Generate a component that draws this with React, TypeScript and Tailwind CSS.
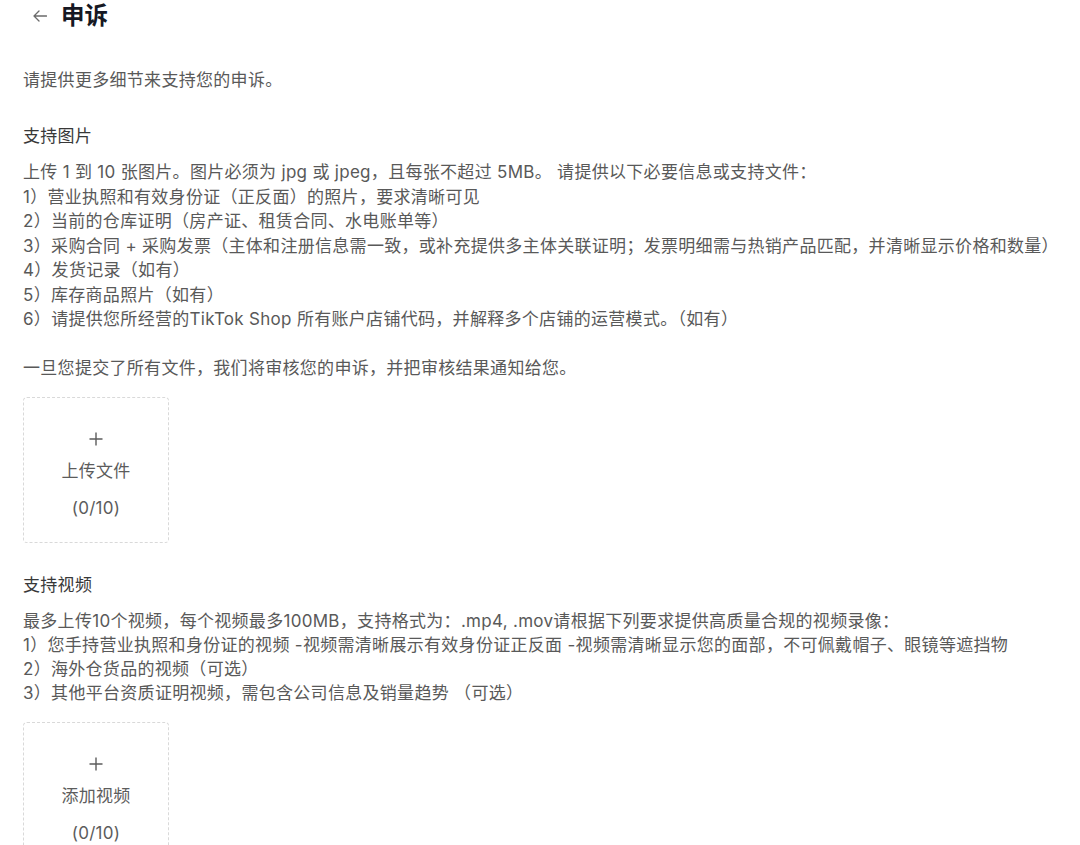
import React from "react";

const font = { fontFamily: '"Inter", "Noto Sans CJK SC", sans-serif' };

function UploadBox({ label }: { label: string }) {
  return (
    <div className="w-[146px] h-[146px] border border-dashed border-[#d9d9d9] rounded-[4px] flex flex-col items-center pt-[33px] text-[#5c5c5c]">
      <svg width="16" height="16" viewBox="0 0 16 16" className="shrink-0">
        <path d="M8 1.5v13M1.5 8h13" stroke="#5c5c5c" strokeWidth="1.4" fill="none" />
      </svg>
      <div className="mt-[12px] text-[17px] leading-[24.5px] tracking-[0.3px]">{label}</div>
      <div className="mt-[12.5px] text-[17px] leading-[24.5px] tracking-[0.3px]">(0/10)</div>
    </div>
  );
}

export default function App() {
  const imageLines = [
    "上传 1 到 10 张图片。图片必须为 jpg 或 jpeg，且每张不超过 5MB。 请提供以下必要信息或支持文件：",
    "1）营业执照和有效身份证（正反面）的照片，要求清晰可见",
    "2）当前的仓库证明（房产证、租赁合同、水电账单等）",
    "3）采购合同 + 采购发票（主体和注册信息需一致，或补充提供多主体关联证明；发票明细需与热销产品匹配，并清晰显示价格和数量）",
    "4）发货记录（如有）",
    "5）库存商品照片（如有）",
    "6）请提供您所经营的TikTok Shop 所有账户店铺代码，并解释多个店铺的运营模式。（如有）",
  ];
  const videoLines = [
    "最多上传10个视频，每个视频最多100MB，支持格式为：.mp4, .mov请根据下列要求提供高质量合规的视频录像：",
    "1）您手持营业执照和身份证的视频 -视频需清晰展示有效身份证正反面 -视频需清晰显示您的面部，不可佩戴帽子、眼镜等遮挡物",
    "2）海外仓货品的视频（可选）",
    "3）其他平台资质证明视频，需包含公司信息及销量趋势 （可选）",
  ];
  return (
    <div className="w-[1080px] h-[845px] overflow-hidden bg-white" style={font}>
      <div className="flex items-center h-[32px] pl-[33px]">
        <svg width="14" height="12" viewBox="0 0 14 12" className="shrink-0">
          <path d="M13.5 6H1M6 1L1 6l5 5" stroke="#6b6b6b" strokeWidth="1.3" fill="none" strokeLinecap="round" strokeLinejoin="round" />
        </svg>
        <div className="ml-[14px] text-[23.5px] leading-[32px] font-bold text-[#161823]">申诉</div>
      </div>
      <div className="px-[23px] text-[17px] tracking-[0.3px]">
        <div className="mt-[36px] leading-[24.5px] text-[#595959]">请提供更多细节来支持您的申诉。</div>
        <div className="mt-[31.5px] leading-[24.5px] font-normal text-[#383838]">支持图片</div>
        <div className="mt-[11.5px] leading-[24.5px] text-[#595959] whitespace-nowrap">
          {imageLines.map((l, i) => (
            <div key={i}>{l}</div>
          ))}
          <div className="mt-[24.5px]">一旦您提交了所有文件，我们将审核您的申诉，并把审核结果通知给您。</div>
        </div>
        <div className="mt-[16px]">
          <UploadBox label="上传文件" />
        </div>
        <div className="mt-[30px] leading-[24.5px] font-normal text-[#383838]">支持视频</div>
        <div className="mt-[11.5px] leading-[24px] text-[#595959] whitespace-nowrap">
          {videoLines.map((l, i) => (
            <div key={i}>{l}</div>
          ))}
        </div>
        <div className="mt-[17px]">
          <UploadBox label="添加视频" />
        </div>
      </div>
    </div>
  );
}
